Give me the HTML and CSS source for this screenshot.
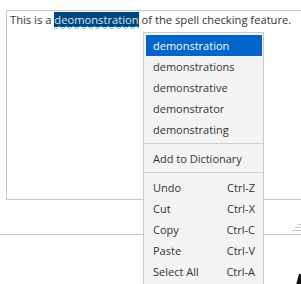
FILE: index.html
```html
<!DOCTYPE html>
<html lang="en">
<head>
  <meta charset="UTF-8" />
  <title>Spell check</title>
  <link rel="stylesheet" href="styles.css">
</head>
<body>
  <div class="editor">
    <p class="text">This is a <span class="misspelled">deomonstration</span> of the spell checking feature.</p>
  </div>
  <div class="grip-row">
    <svg class="grip" width="10" height="9" viewBox="0 0 10 9">
      <line x1="7" y1="1.5" x2="10" y2="1.5" stroke="#c8c8c8" />
      <line x1="4" y1="4.5" x2="10" y2="4.5" stroke="#c8c8c8" />
      <line x1="1" y1="7.5" x2="10" y2="7.5" stroke="#c8c8c8" />
    </svg>
  </div>
  <div class="footer">
    <svg class="corner" width="5" height="11" viewBox="0 0 5 11">
      <polygon points="3,0 5,0 5,11 0,11" fill="#111" />
    </svg>
  </div>

  <ul class="menu">
    <li class="item active">demonstration</li>
    <li class="item">demonstrations</li>
    <li class="item">demonstrative</li>
    <li class="item">demonstrator</li>
    <li class="item">demonstrating</li>
    <li class="sep"></li>
    <li class="item">Add to Dictionary</li>
    <li class="sep"></li>
    <li class="item">Undo <span class="key">Ctrl-Z</span></li>
    <li class="item">Cut <span class="key">Ctrl-X</span></li>
    <li class="item">Copy <span class="key">Ctrl-C</span></li>
    <li class="item">Paste <span class="key">Ctrl-V</span></li>
    <li class="item">Select All <span class="key">Ctrl-A</span></li>
  </ul>
</body>
</html>
```

FILE: styles.css
```css
* { margin: 0; padding: 0; box-sizing: border-box; }
html, body { height: 100%; overflow: hidden; }
body {
  background: #fff;
  color: #333;
  font-family: 'Open Sans', sans-serif;
  font-size: 11px;
  position: relative;
}
.editor {
  margin: 10px -20px 0 6px;
  height: 190px;
  border: 1px solid #c8c8c8;
  padding: 0 3px;
}
.text { font-size: 11.2px; line-height: 17px; }
.misspelled {
  background: #00457e;
  color: #d8e8f6;
  text-decoration: underline wavy #37c0f0;
  text-decoration-thickness: 1px;
  text-underline-offset: 1px;
}
.grip-row {
  height: 34px;
  display: flex;
  justify-content: flex-end;
  align-items: flex-end;
  padding-bottom: 2px;
}
.footer {
  border-top: 1px solid #c8c8c8;
  height: 60px;
  display: flex;
  justify-content: flex-end;
  padding-top: 39px;
  overflow: hidden;
}
.menu {
  position: absolute;
  left: 143px;
  top: 32px;
  width: 121px;
  list-style: none;
  background: #f4f4f4;
  border: 1px solid #cbcbcb;
  padding: 2px 1px 2px 2px;
}
.item {
  display: flex;
  justify-content: space-between;
  height: 21px;
  line-height: 21px;
  padding: 0 7px;
  color: #333;
}
.item.active { background: #0066cc; color: #fff; }
.sep {
  height: 1px;
  background: #d0d0d0;
  margin: 3px -1px 4px -2px;
}
```
